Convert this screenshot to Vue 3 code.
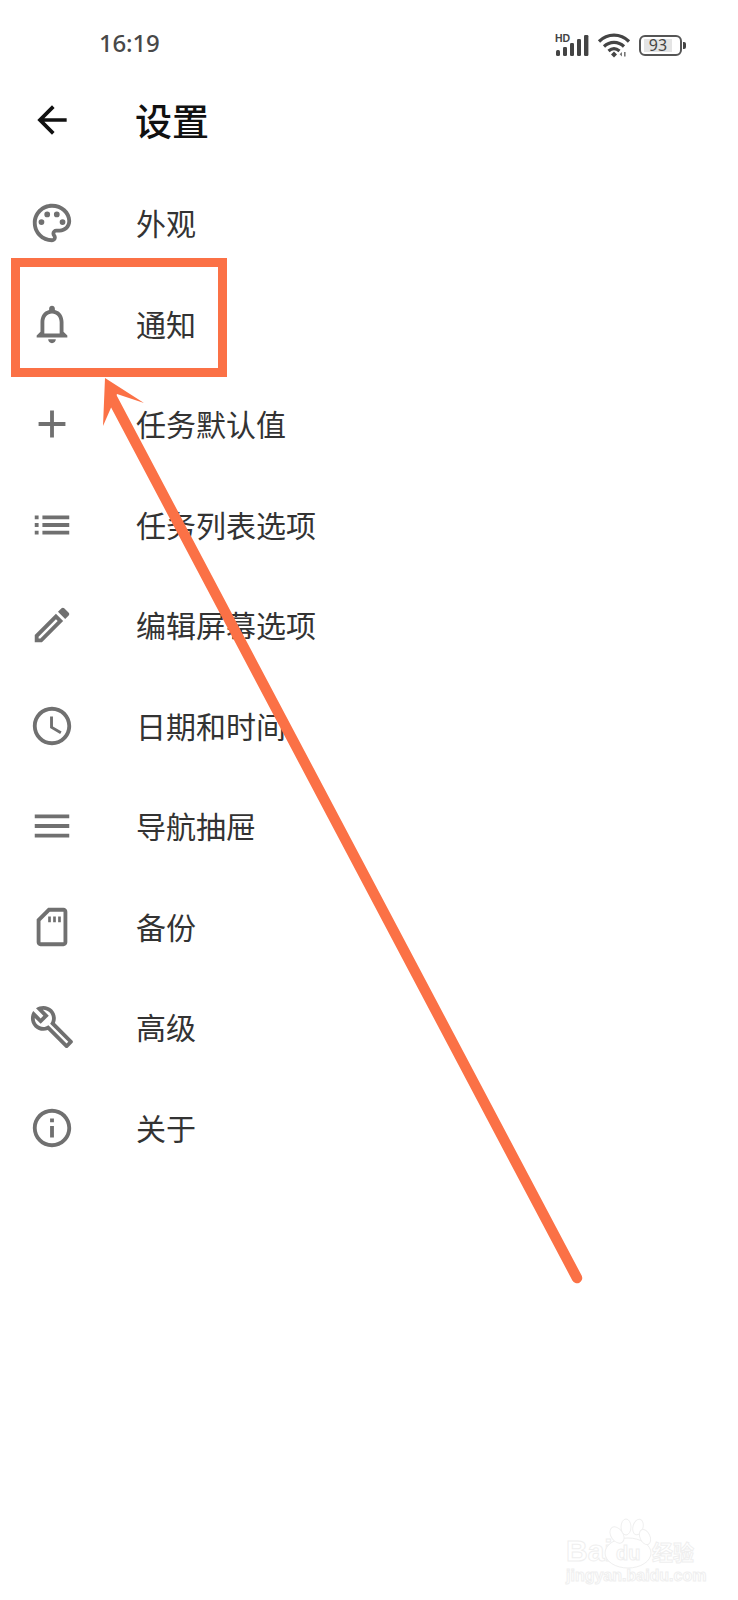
<script setup>
const rows = [
  { label: '外观', icon: 'palette' },
  { label: '通知', icon: 'bell' },
  { label: '任务默认值', icon: 'add' },
  { label: '任务列表选项', icon: 'list' },
  { label: '编辑屏幕选项', icon: 'edit' },
  { label: '日期和时间', icon: 'clock' },
  { label: '导航抽屉', icon: 'menu' },
  { label: '备份', icon: 'sd' },
  { label: '高级', icon: 'build' },
  { label: '关于', icon: 'info' }
]
const paths = {
  palette: 'M12 22C6.49 22 2 17.51 2 12S6.49 2 12 2s10 4.04 10 9c0 3.31-2.69 6-6 6h-1.77c-.28 0-.5.22-.5.5 0 .12.05.23.13.33.41.47.64 1.06.64 1.67A2.5 2.5 0 0 1 12 22zm0-18c-4.41 0-8 3.59-8 8s3.59 8 8 8c.28 0 .5-.22.5-.5a.54.54 0 0 0-.14-.35c-.41-.46-.63-1.05-.63-1.65a2.5 2.5 0 0 1 2.5-2.5H16c2.21 0 4-1.79 4-4 0-3.86-3.59-7-8-7zM5 11.5a1.5 1.5 0 1 0 3 0a1.5 1.5 0 1 0-3 0zM8 7.5a1.5 1.5 0 1 0 3 0a1.5 1.5 0 1 0-3 0zM13 7.5a1.5 1.5 0 1 0 3 0a1.5 1.5 0 1 0-3 0zM16 11.5a1.5 1.5 0 1 0 3 0a1.5 1.5 0 1 0-3 0z',
  bell: 'M12 22c1.1 0 2-.9 2-2h-4c0 1.1.9 2 2 2zm6-6v-5c0-3.07-1.63-5.64-4.5-6.32V4c0-.83-.67-1.5-1.5-1.5s-1.5.67-1.5 1.5v.68C7.64 5.36 6 7.92 6 11v5l-2 2v1h16v-1l-2-2zm-2 1H8v-6c0-2.48 1.51-4.5 4-4.5s4 2.02 4 4.5v6z',
  add: 'M19 13h-6v6h-2v-6H5v-2h6V5h2v6h6v2z',
  list: 'M3 13h2v-2H3v2zm0 4h2v-2H3v2zm0-8h2V7H3v2zm4 4h14v-2H7v2zm0 4h14v-2H7v2zM7 7v2h14V7H7z',
  edit: 'M14.06 9.02l.92.92L5.92 19H5v-.92l9.06-9.06M14.06 6.19L3 17.25V21h3.75L17.81 9.94l-3.75-3.75zM17.66 3c-.25 0-.51.1-.7.29l-1.83 1.83 3.75 3.75 1.83-1.83c.39-.39.39-1.02 0-1.41l-2.34-2.34c-.2-.2-.45-.29-.71-.29z',
  clock: 'M11.99 2C6.47 2 2 6.48 2 12s4.47 10 9.99 10C17.52 22 22 17.52 22 12S17.52 2 11.99 2zM12 20c-4.42 0-8-3.58-8-8s3.58-8 8-8 8 3.58 8 8-3.58 8-8 8zm.5-13H11v6l5.25 3.15.75-1.23-4.5-2.67z',
  menu: 'M3 18h18v-2H3v2zm0-5h18v-2H3v2zm0-7v2h18V6H3z',
  sd: 'M18 4v16H6V8.83L10.83 4H18m0-2h-8L4 8v12c0 1.1.9 2 2 2h12c1.1 0 2-.9 2-2V4c0-1.1-.9-2-2-2zM10 6.5h1.4v3H10zm2.6 0h1.4v3h-1.4zm2.6 0h1.4v3h-1.4z',
  build: 'M22.61 18.99l-9.08-9.08c.93-2.34.45-5.1-1.44-7C9.79.61 6.21.4 3.66 2.25L7.5 6.1 6.08 7.5 2.25 3.67C.4 6.21.61 9.79 2.91 12.08c1.86 1.86 4.57 2.35 6.89 1.48l9.11 9.11c.39.39 1.02.39 1.41 0l2.3-2.3c.4-.38.4-1.01-.01-1.38zm-3 1.6l-9.46-9.46c-.61.45-1.29.72-2 .82-1.36.2-2.79-.21-3.83-1.25C3.37 9.76 2.93 8.5 3 7.26l3.09 3.09 4.24-4.24-3.09-3.09c1.24-.07 2.49.37 3.44 1.31 1.08 1.08 1.49 2.57 1.24 3.96-.12.71-.42 1.37-.88 1.96l9.45 9.45-.88.88z',
  info: 'M11 7h2v2h-2zm0 4h2v6h-2zm1-9C6.48 2 2 6.48 2 12s4.48 10 10 10 10-4.48 10-10S17.52 2 12 2zm0 18c-4.41 0-8-3.59-8-8s3.59-8 8-8 8 3.59 8 8-3.59 8-8 8z'
}
</script>

<template>
  <div class="page">
    <div class="status">
      <span class="time">16:19</span>
      <div class="status-icons">
        <svg class="signal" width="36" height="24" viewBox="0 0 36 24">
          <text x="0" y="8.5" class="hd">HD</text>
          <rect x="1" y="17" width="4" height="6" rx="1.5" />
          <rect x="8" y="14" width="4" height="9" rx="1.2" />
          <rect x="15" y="10" width="4" height="13" rx="1.2" />
          <rect x="22" y="6" width="4" height="17" rx="1.2" />
          <rect x="29" y="2" width="4.4" height="21" rx="1.2" />
        </svg>
        <svg class="wifi" width="34" height="26" viewBox="0 0 34 26" fill="none" stroke="#444" stroke-width="3.2">
          <path d="M2 9.5C10.5 1 23.5 1 32 9.5" />
          <path d="M7 14.5C12.8 9 21.2 9 27 14.5" />
          <path d="M11.5 19C15 16 19 16 22.5 19" />
          <path d="M14 22.5L17 19.6L20 22.5L17 25.4Z" fill="#444" stroke="none" />
          <path d="M25 20v4.6l-2.4-2.3zM27 20h1.6v4.6H27z" fill="#777" stroke="none" />
        </svg>
        <div class="battery">
          <div class="shell"><span class="level">93</span></div>
          <i class="nub"></i>
        </div>
      </div>
    </div>

    <header class="bar">
      <svg class="back" width="44" height="44" viewBox="0 0 24 24"><path d="M20 11H7.83l5.59-5.59L12 4l-8 8 8 8 1.41-1.41L7.83 13H20v-2z" /></svg>
      <h1 class="title">设置</h1>
    </header>

    <ul class="list">
      <li v-for="row in rows" :key="row.label" class="row">
        <span class="icon-box">
          <svg class="icon" width="46" height="46" viewBox="0 0 24 24"><path :d="paths[row.icon]" /></svg>
        </span>
        <span class="label">{{ row.label }}</span>
      </li>
    </ul>

    <div class="highlight"></div>

    <svg class="arrow" width="738" height="1600" viewBox="0 0 738 1600">
      <path d="M577 1278L111 396" stroke="#fb7146" stroke-width="10.5" stroke-linecap="round" fill="none" />
      <path d="M105 378L144 403L117 394L103 426Z" fill="#fb7146" />
    </svg>

    <svg class="mark" width="738" height="1600" viewBox="0 0 738 1600">
      <g fill="#fff" stroke="#efefef" stroke-width="1">
        <text x="566" y="1561" class="wm-big">Bai</text>
        <ellipse cx="628" cy="1553" rx="23" ry="15" />
        <ellipse cx="617" cy="1535" rx="6" ry="9" transform="rotate(-35 617 1535)" />
        <ellipse cx="626" cy="1527" rx="5" ry="8" />
        <ellipse cx="638" cy="1527" rx="5" ry="8" transform="rotate(15 638 1527)" />
        <ellipse cx="645" cy="1537" rx="5" ry="8" transform="rotate(-25 645 1537)" />
        <text x="616" y="1560" class="wm-du">du</text>
        <text x="652" y="1560" class="wm-cn">经验</text>
        <text x="566" y="1581" class="wm-url">jingyan.baidu.com</text>
      </g>
    </svg>
  </div>
</template>

<style>
html, body { margin: 0; background: #fff; }
</style>

<style scoped>
.page {
  position: relative;
  width: 738px;
  height: 1600px;
  overflow: hidden;
  background: #fff;
  font-family: "Noto Sans CJK SC", "Noto Sans", sans-serif;
}
.status {
  height: 74px;
  padding: 25px 52px 0 99px;
  box-sizing: border-box;
  display: flex;
  justify-content: space-between;
  align-items: flex-start;
}
.time {
  font-family: "Noto Sans", sans-serif;
  font-size: 24px;
  line-height: 36px;
  color: #484848;
  font-weight: 500;
  letter-spacing: -0.2px;
}
.status-icons { display: flex; align-items: center; gap: 6px; padding-top: 7px; }
.signal rect { fill: #444; }
.hd { font: 700 10.5px "Liberation Sans", sans-serif; fill: #444; }
.wifi { margin-right: 2px; }
.battery { display: flex; align-items: center; gap: 1px; }
.shell {
  width: 43px;
  height: 21px;
  box-sizing: border-box;
  border: 2px solid #555;
  border-radius: 6px;
  padding: 2px 8px 2px 3px;
  display: flex;
}
.level {
  flex: 1;
  background: #e4e4e4;
  color: #444;
  font: 16px/13px "Noto Sans", sans-serif;
  text-align: center;
}
.nub { width: 3px; height: 7px; background: #444; border-radius: 0 2px 2px 0; }
.bar {
  height: 96px;
  display: flex;
  align-items: center;
  padding: 0 0 4px 30px;
  box-sizing: border-box;
}
.back { fill: #111; }
.title {
  margin: 0 0 0 61px;
  font-size: 37px;
  line-height: 48px;
  font-weight: 500;
  color: #111;
}
.list { margin: 0; padding: 3px 0 0; list-style: none; }
.row {
  height: 100.5px;
  display: flex;
  align-items: center;
  padding-left: 29px;
}
.icon-box { width: 107px; display: flex; }
.label {
  font-size: 30px;
  line-height: 40px;
  padding-bottom: 2px;
  color: #333;
}
.icon { fill: #707070; }
.highlight {
  position: absolute;
  left: 11px;
  top: 258px;
  width: 216px;
  height: 119px;
  box-sizing: border-box;
  border: 9px solid #fb7146;
}
.arrow, .mark { position: absolute; left: 0; top: 0; pointer-events: none; }
.wm-big { font: 700 30px "Liberation Sans", sans-serif; }
.wm-du { font: 700 20px "Liberation Sans", sans-serif; }
.wm-cn { font: 700 21px "Noto Sans CJK SC", sans-serif; }
.wm-url { font: 700 16px "Liberation Sans", sans-serif; }
</style>
